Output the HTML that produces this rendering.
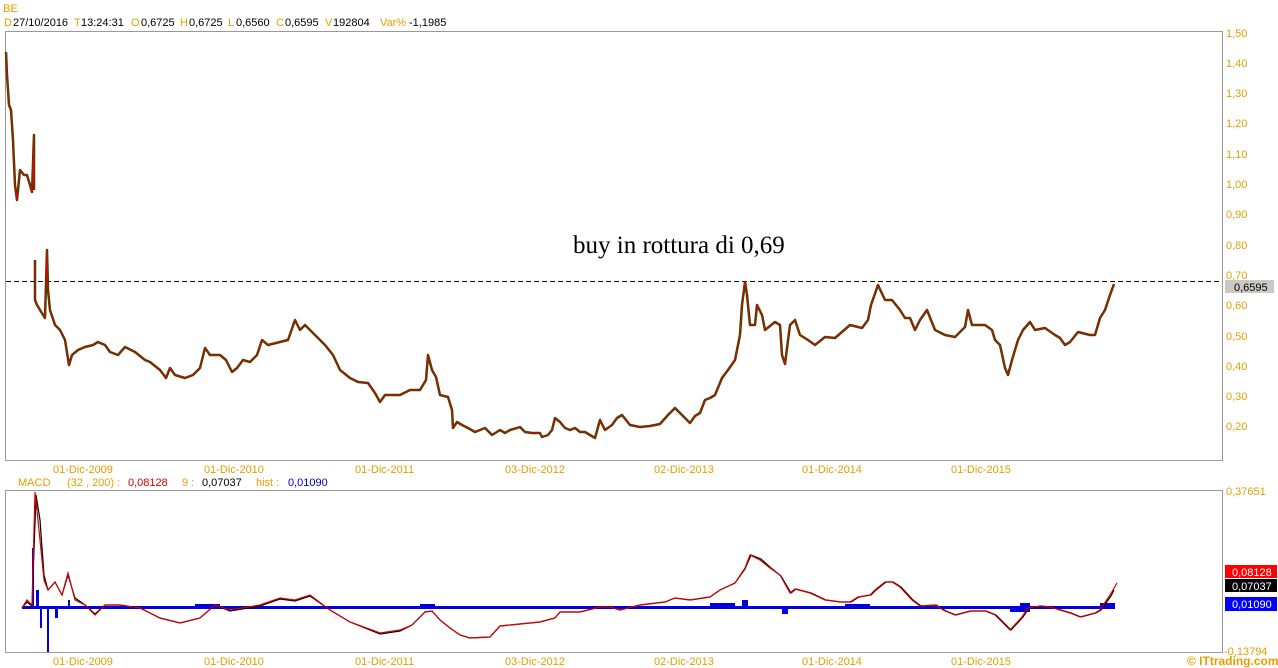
<!DOCTYPE html>
<html><head><meta charset="utf-8"><style>
html,body{margin:0;padding:0;background:#fff;width:1278px;height:668px;overflow:hidden}
svg{display:block}
text{font-family:"Liberation Sans",Arial,sans-serif;font-size:11px}
.o{fill:#e0a000}
.k{fill:#000}
</style></head><body>
<svg width="1278" height="668" viewBox="0 0 1278 668" xmlns="http://www.w3.org/2000/svg">
<text x="3" y="12" class="o" font-size="12">BE</text>
<g>
<text x="4" y="26" class="o">D</text><text x="13" y="26" class="k">27/10/2016</text>
<text x="74" y="26" class="o">T</text><text x="81" y="26" class="k">13:24:31</text>
<text x="131" y="26" class="o">O</text><text x="141" y="26" class="k">0,6725</text>
<text x="180" y="26" class="o">H</text><text x="189" y="26" class="k">0,6725</text>
<text x="228" y="26" class="o">L</text><text x="236" y="26" class="k">0,6560</text>
<text x="276" y="26" class="o">C</text><text x="285" y="26" class="k">0,6595</text>
<text x="325" y="26" class="o">V</text><text x="333" y="26" class="k">192804</text>
<text x="380" y="26" class="o">Var%</text><text x="409" y="26" class="k">-1,1985</text>
</g>
<rect x="5.5" y="31.5" width="1217" height="429" fill="none" stroke="#999"/>
<rect x="5.5" y="490.5" width="1217" height="162" fill="none" stroke="#999"/>
<g class="o" font-size="11">
<text x="1226" y="37">1,50</text><text x="1226" y="67">1,40</text><text x="1226" y="97">1,30</text><text x="1226" y="127">1,20</text><text x="1226" y="158">1,10</text><text x="1226" y="188">1,00</text><text x="1226" y="218">0,90</text><text x="1226" y="249">0,80</text><text x="1226" y="279">0,70</text><text x="1226" y="309">0,60</text><text x="1226" y="340">0,50</text><text x="1226" y="370">0,40</text><text x="1226" y="400">0,30</text><text x="1226" y="430">0,20</text>
<text x="1226" y="495">0,37651</text><text x="1224" y="655">-0,13794</text>
</g>
<rect x="1225" y="280" width="49" height="13" fill="#ccc9c4"/>
<text x="1234" y="291" class="k">0,6595</text>
<g class="o">
<text x="53" y="473">01-Dic-2009</text><text x="204" y="473">01-Dic-2010</text><text x="355" y="473">01-Dic-2011</text><text x="505" y="473">03-Dic-2012</text><text x="654" y="473">02-Dic-2013</text><text x="802" y="473">01-Dic-2014</text><text x="951" y="473">01-Dic-2015</text>
<text x="53" y="665">01-Dic-2009</text><text x="204" y="665">01-Dic-2010</text><text x="355" y="665">01-Dic-2011</text><text x="505" y="665">03-Dic-2012</text><text x="654" y="665">02-Dic-2013</text><text x="802" y="665">01-Dic-2014</text><text x="951" y="665">01-Dic-2015</text>
</g>
<text x="18" y="486" class="o">MACD</text>
<text x="67" y="486" class="o">(32 , 200) :</text>
<text x="128" y="486" fill="#d00000">0,08128</text>
<text x="182" y="486" class="o">9 :</text>
<text x="202" y="486" class="k">0,07037</text>
<text x="256" y="486" class="o">hist :</text>
<text x="288" y="486" fill="#0000c0">0,01090</text>
<line x1="6" y1="281.5" x2="1222" y2="281.5" stroke="#000" stroke-dasharray="5,3"/>
<text x="573" y="253" class="k" style="font-family:'Liberation Serif',serif;font-size:25px">buy in rottura di 0,69</text>
<g fill="none" stroke-linejoin="round">
<polyline stroke="#006000" stroke-width="2.5" points="6,52 7,75 9,105 11,110 13,140 15,185 17,200 20,170 24,175 27,175 30,185 32,192 34,135 34,190"/>
<polyline stroke="#e00000" stroke-width="1.2" points="6,52 7,75 9,105 11,110 13,140 15,185 17,200 20,170 24,175 27,175 30,185 32,192 34,135 34,190"/>
<polyline stroke="#006000" stroke-width="2.5" points="35,260 35,300 37,305 40,310 45,318 47,250 48,290 50,310 55,325 60,330 65,340 69,365 72,355 78,350 85,347 93,345 98,342 105,345 110,352 118,355 125,347 135,352 145,360 150,362 160,370 166,378 170,368 175,375 185,378 193,375 200,368 205,348 210,355 220,355 226,360 232,372 237,368 243,360 250,362 257,355 262,340 268,345 280,342 288,340 295,320 300,330 305,325 310,330 320,340 325,345 333,355 340,370 350,378 358,382 368,383 375,393 380,402 385,395 390,395 400,395 410,390 420,390 426,380 428,355 432,370 436,377 440,395 448,397 452,410 453,428 457,422 462,425 468,428 475,432 480,430 485,428 492,435 500,430 505,433 510,430 517,428 520,427 525,432 532,433 540,433 542,437 548,435 552,430 555,418 560,422 565,428 570,430 575,428 580,432 585,432 590,435 595,438 600,420 605,430 612,425 617,418 622,415 630,425 640,427 650,426 660,424 668,415 675,408 680,413 685,418 690,423 695,416 700,413 705,400 710,398 715,395 722,378 728,370 735,360 740,335 742,305 745,282 747,295 750,325 755,325 757,305 762,315 765,330 775,322 780,325 782,355 785,364 790,325 795,320 800,335 808,340 815,345 825,337 835,338 850,325 862,328 868,320 871,305 878,285 885,300 892,300 900,310 905,318 910,318 915,330 920,320 927,310 935,330 945,335 955,337 965,327 968,310 972,325 985,325 992,330 995,340 1000,345 1005,368 1008,375 1012,360 1018,340 1023,330 1030,322 1035,330 1045,328 1055,335 1060,338 1065,345 1070,342 1078,332 1090,335 1095,335 1100,318 1105,310 1110,295 1114,284"/>
<polyline stroke="#e00000" stroke-width="1.2" points="35,260 35,300 37,305 40,310 45,318 47,250 48,290 50,310 55,325 60,330 65,340 69,365 72,355 78,350 85,347 93,345 98,342 105,345 110,352 118,355 125,347 135,352 145,360 150,362 160,370 166,378 170,368 175,375 185,378 193,375 200,368 205,348 210,355 220,355 226,360 232,372 237,368 243,360 250,362 257,355 262,340 268,345 280,342 288,340 295,320 300,330 305,325 310,330 320,340 325,345 333,355 340,370 350,378 358,382 368,383 375,393 380,402 385,395 390,395 400,395 410,390 420,390 426,380 428,355 432,370 436,377 440,395 448,397 452,410 453,428 457,422 462,425 468,428 475,432 480,430 485,428 492,435 500,430 505,433 510,430 517,428 520,427 525,432 532,433 540,433 542,437 548,435 552,430 555,418 560,422 565,428 570,430 575,428 580,432 585,432 590,435 595,438 600,420 605,430 612,425 617,418 622,415 630,425 640,427 650,426 660,424 668,415 675,408 680,413 685,418 690,423 695,416 700,413 705,400 710,398 715,395 722,378 728,370 735,360 740,335 742,305 745,282 747,295 750,325 755,325 757,305 762,315 765,330 775,322 780,325 782,355 785,364 790,325 795,320 800,335 808,340 815,345 825,337 835,338 850,325 862,328 868,320 871,305 878,285 885,300 892,300 900,310 905,318 910,318 915,330 920,320 927,310 935,330 945,335 955,337 965,327 968,310 972,325 985,325 992,330 995,340 1000,345 1005,368 1008,375 1012,360 1018,340 1023,330 1030,322 1035,330 1045,328 1055,335 1060,338 1065,345 1070,342 1078,332 1090,335 1095,335 1100,318 1105,310 1110,295 1114,284"/>
</g>
<rect x="22" y="606" width="1093" height="3" fill="#0000e0"/>
<g fill="#0000e0">
<rect x="32" y="548" width="2" height="60"/><rect x="36" y="590" width="3" height="18"/><rect x="40" y="608" width="2" height="20"/><rect x="47" y="608" width="2" height="44"/><rect x="55" y="608" width="3" height="10"/><rect x="68" y="600" width="2" height="8"/>
<rect x="195" y="604" width="25" height="3"/><rect x="420" y="604" width="15" height="3"/><rect x="710" y="603" width="25" height="4"/><rect x="742" y="600" width="6" height="7"/><rect x="782" y="608" width="6" height="6"/><rect x="845" y="604" width="25" height="3"/><rect x="1010" y="608" width="20" height="4"/><rect x="1020" y="603" width="10" height="4"/><rect x="1100" y="603" width="15" height="5"/>
</g>
<g fill="none">
<polyline stroke="#000" stroke-width="1.2" points="22,608 27,602 32,606 36,495 40,520 44,575 48,590 55,582 62,595 68,575 75,598 85,605 95,614 105,605 120,605 140,608 160,618 180,623 200,618 215,605 230,611 260,606 280,599 295,601 310,596 330,610 350,622 380,634 400,631 412,625 425,612 432,611 440,620 450,628 460,635 470,638 490,637 500,626 520,624 540,622 555,618 560,612 580,612 600,607 610,607 620,610 640,605 665,602 675,598 690,600 710,597 720,590 735,583 745,569 751,555 761,559 771,568 781,576 791,593 796,589 811,593 826,600 841,602 851,602 859,597 871,595 876,590 886,582 893,582 901,587 913,600 921,606 936,605 946,611 956,615 971,611 986,611 996,615 1011,630 1023,617 1029,608 1041,606 1051,607 1061,610 1071,613 1081,617 1096,613 1101,610 1111,596 1114,590"/>
<polyline stroke="#d00000" stroke-width="1.2" points="22,608 27,600 32,605 35,492 38,520 44,580 48,590 55,582 62,595 68,573 75,600 85,605 95,615 105,605 120,605 140,608 160,618 180,623 200,618 215,605 230,610 260,605 280,598 295,600 310,595 330,610 350,622 380,633 400,630 412,625 425,612 432,611 440,620 450,628 460,635 470,638 490,637 500,626 520,624 540,622 555,618 560,612 580,612 600,607 610,607 620,610 640,605 665,602 675,598 690,600 710,597 720,590 735,583 745,568 750,555 760,560 770,568 780,575 790,593 795,589 810,593 825,600 840,602 850,602 858,597 870,595 875,590 885,582 892,582 900,587 912,600 920,606 935,605 945,611 955,615 970,611 985,611 995,615 1010,630 1022,617 1028,608 1040,606 1050,607 1060,610 1070,613 1080,617 1095,613 1100,610 1110,595 1117,583"/>
</g>
<rect x="1225" y="565" width="52" height="13" fill="#ff0000"/><text x="1232" y="576" fill="#fff">0,08128</text>
<rect x="1225" y="579" width="52" height="13" fill="#000"/><text x="1232" y="590" fill="#fff">0,07037</text>
<rect x="1225" y="597" width="52" height="14" fill="#0000ff"/><text x="1232" y="608" fill="#fff">0,01090</text>
<text x="1187" y="665" fill="#e0a000" style="font-weight:bold;font-size:12px">© ITtrading.com</text>
</svg>
</body></html>
